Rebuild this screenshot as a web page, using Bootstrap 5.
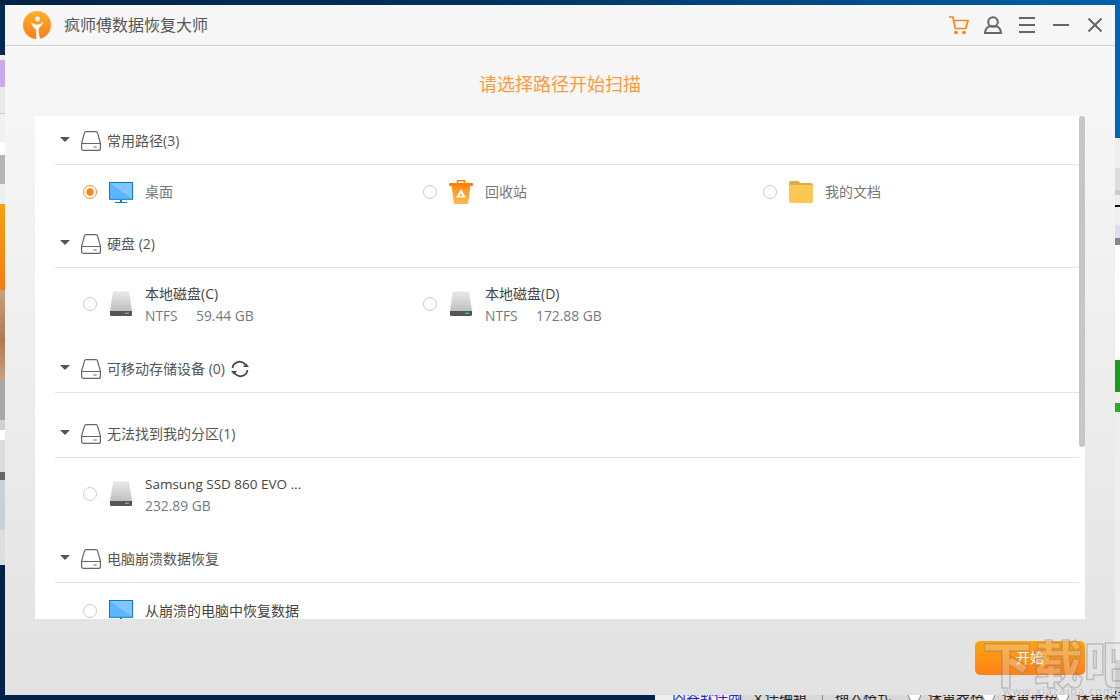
<!DOCTYPE html>
<html lang="zh">
<head>
<meta charset="utf-8">
<title>疯师傅数据恢复大师</title>
<link rel="stylesheet" href="https://cdn.jsdelivr.net/npm/bootstrap@5.3.0/dist/css/bootstrap.min.css">
<style>
html,body{margin:0;height:100%;overflow:hidden}
body{font-family:"Open Sans","Noto Sans CJK SC",sans-serif;font-size:14px;color:#555}
.desk{position:relative;width:1120px;height:700px;overflow:hidden;
 background:
  linear-gradient(90deg,#012246 0,#01305c 40%,#0060a8 100%) 0 0/100% 5px no-repeat,
  linear-gradient(180deg,#012a52 0 55px,#eee 55px 60px,#c9a9e8 60px 87px,#eaeaea 87px 113px,#ccc 113px 114px,#f0f0f0 114px 142px,#fff 142px 155px,#b5b5b5 155px 184px,#eee 184px 204px,#f7a010 204px,#f47c10 290px,#c9a080 290px,#b07a50 340px,#c9a080 380px,#a8a8a8 380px 420px,#d0d0d0 420px 430px,#fff 430px 440px,#ddd 440px 472px,#666 472px 480px,#c8d0d8 480px 530px,#ddd 530px 565px,#022347 565px) 0 0/5px 100% no-repeat,
  linear-gradient(180deg,#0066b0 0 138px,#eee 138px 168px,#ddd 168px 190px,#ccc 190px 195px,#eee 195px 205px,#111 205px 207px,#eee 207px 225px,#dde 225px 238px,#888 238px 245px,#fff 245px 360px,#1a9a1a 360px 392px,#eee 392px 403px,#2ea82e 403px 412px,#eee 412px 660px,#ccc 660px) 100% 0/5px 100% no-repeat,
  linear-gradient(90deg,#022347 0 655px,#efefef 655px 738px,#d8d8d8 738px) 0 100%/100% 5px no-repeat,
  #eee}
.behind{position:absolute;left:672px;top:687px;font-size:14px;line-height:18px;color:#222;white-space:nowrap}
.behind-link{color:#22c;width:66px}
.behind-cell{width:77px;border-left:1px solid #888;padding-left:12px}
.behind-cell2{width:76px;margin-left:7px}
.behind-opt{width:74px;padding-left:30px;position:relative}
.behind-opt::before{content:"";position:absolute;left:10px;top:2px;width:13px;height:13px;border:1px solid #777;border-radius:50%;background:#fff}
.appwin{position:absolute;left:5px;top:5px;width:1110px;height:690px;display:flex;flex-direction:column;background:linear-gradient(180deg,#f8f8f8 0,#f4f4f4 25%,#e2e2e2 100%)}
.titlebar{height:41px;flex:none;border-bottom:1px solid #d2d2d2;background:#f7f7f7;padding-left:18px;padding-right:13px}
.apptitle{font-size:16px;color:#555;margin-left:13px;line-height:22px}
.tool-ico{display:block;color:#666}
.tool-cart{color:#ff8416}
.t-gap1{margin-left:15px}.t-gap2{margin-left:17px}.t-gap3{margin-left:18px}.t-gap4{margin-left:19px}
.heading-pick{font-size:18px;line-height:24px;color:#ff9a3c;text-align:center;margin:26px 0 20px;font-weight:400}
.panel-wrap{position:relative;margin:0 30px;height:503px;background:#fff;overflow:hidden;flex:none}
.thumb{position:absolute;top:0;right:0;width:6px;height:331px;background:#c6c6c6;border-radius:3px}
.scroll-body{padding:2px 6px 0 20px}
.sec-head{height:47px;border-bottom:1px solid #e2e2e2;color:#555;line-height:20px;padding-bottom:1px}
.caret-d{width:0;height:0;border-left:5px solid transparent;border-right:5px solid transparent;border-top:5px solid #555;margin:0 11px 2px 5px}
.sec-title{margin-left:6px}
.refresh{margin-left:5px}
.body-a{height:56px;padding-bottom:2px}.body-b{height:78px;padding-top:15px}.body-c{height:18px}.body-d{padding-top:17px}
.item{width:340px;padding-left:28px}
.form-check-input.pick{width:14px;height:14px;margin:0 12px 0 0;border:1.5px solid #ccc;flex:none;background-image:none;box-shadow:none}
.form-check-input.pick:checked{background-color:#fff;border-color:#ff8c2e;background-image:radial-gradient(circle,#ff8416 0 3.4px,transparent 4px)}
.item-two .pick,.item-two .item-ico{margin-bottom:2px}
.item-ico{flex:none;display:block}
.lab{margin-left:12px;color:#777;line-height:20px}
.two{margin-left:12px;line-height:22px}
.two-top{color:#444}
.two-name{font-size:13.5px}
.two-sub{color:#6f7a82;font-size:13.8px}
.fs{display:inline-block;width:51px}
.lab-dark{color:#444}
.foot{flex:1;padding-right:30px;padding-top:22px}
.btn.go{width:110px;height:34px;padding:0;border:0;border-radius:5px;background:linear-gradient(180deg,#ffa412,#ff8119);color:#fff;font-size:14px;line-height:34px}
.wm{position:absolute;left:982px;top:630px;font-family:"Noto Sans CJK SC",sans-serif;font-weight:900;font-size:50px;line-height:62px;letter-spacing:1px;white-space:nowrap;color:rgba(230,230,230,.28);-webkit-text-stroke:1.5px rgba(110,110,110,.33);pointer-events:none}
.wm-url{position:absolute;left:1003px;top:684px;font-size:11px;line-height:14px;letter-spacing:1px;color:rgba(120,120,120,.35);pointer-events:none}
.spr{position:absolute;width:0;height:0}
</style>
</head>
<body>
<svg class="spr" aria-hidden="true">
 <defs>
  <linearGradient id="gm" x1="0" y1="1" x2="1" y2="0"><stop offset=".5" stop-color="#5cb6ff"/><stop offset=".5" stop-color="#7fc6ff"/></linearGradient>
  <linearGradient id="gd" x1="0" y1="0" x2="0" y2="1"><stop offset="0" stop-color="#e8e8e8"/><stop offset="1" stop-color="#bdbdbd"/></linearGradient>
  <linearGradient id="gt" x1="0" y1="0" x2="0" y2="1"><stop offset="0" stop-color="#ff8a10"/><stop offset="1" stop-color="#ffbb4a"/></linearGradient>
  <linearGradient id="gl" x1="0" y1="0" x2="0" y2="1"><stop offset="0" stop-color="#ffb02e"/><stop offset="1" stop-color="#ff7d14"/></linearGradient>
 </defs>
 <symbol id="hdd" viewBox="0 0 20 20"><path d="M5 .6h10c.8 0 1.300.4 1.500 1.200L19.400 12v5.400c0 1.300-.8 2-2 2H2.600c-1.200 0-2-.7-2-2V12L3.500 1.800C3.700 1 4.200.6 5 .6zM.8 12.500h18.400M12.500 16h3.200" fill="none" stroke="#666" stroke-width="1.200"/></symbol>
 <symbol id="mon" viewBox="0 0 24 21"><rect x=".5" y=".5" width="23" height="16.800" fill="url(#gm)" stroke="#0a7cc4"/><path d="M11 18h2v2h-2zM6 20h12v1H6z" fill="#0a7cc4"/></symbol>
 <symbol id="disk" viewBox="0 0 24 26"><path d="M4.500 1h15l3.500 18.500V21H1v-1.500z" fill="url(#gd)" stroke="#d8d8d8" stroke-width=".6"/><path d="M1 20h22v3.500c0 1-.6 1.500-1.500 1.500h-19C1.600 25 1 24.500 1 23.500z" fill="#565656"/><rect x="16" y="21.600" width="4" height="1.300" fill="#3fdc6a"/></symbol>
</svg>
<div class="desk">
 <div class="behind d-flex"><span class="behind-link">内容软件园</span><span class="behind-cell">文件编辑</span><span class="behind-cell behind-cell2">插入格式</span><span class="behind-opt">保留表格</span><span class="behind-opt">保留链接</span><span class="behind-opt">保留格式</span></div>
 <div class="appwin">
  <div class="titlebar d-flex align-items-center">
   <svg width="28" height="28" viewBox="0 0 28 28" class="tool-ico"><circle cx="14" cy="14" r="14" fill="url(#gl)"/><circle cx="14.500" cy="8" r="2.400" fill="#fff"/><path d="M8 11C9 16 12 17 13 19L13.500 28H17C16 23 15 19 16 17C18 15 20 13 20.500 10C18 13 16 13.500 14.500 13.500C12 13.500 10 13 8 11z" fill="#fff"/></svg>
   <span class="apptitle">疯师傅数据恢复大师</span>
   <div class="ms-auto d-flex align-items-center">
    <svg class="tool-ico tool-cart" width="20" height="18" viewBox="0 0 20 18" fill="none" stroke="currentColor" stroke-width="1.700"><path d="M0 1h3.800l2.500 11.500h10.400L19 4.500H4.800"/><circle cx="7" cy="16.500" r="1" fill="currentColor"/><circle cx="15" cy="16.500" r="1" fill="currentColor"/></svg>
    <svg class="tool-ico t-gap1" width="18" height="18" viewBox="0 0 18 18" fill="none" stroke="currentColor" stroke-width="2"><circle cx="9" cy="6" r="4.800"/><path d="M1 17c0-4 3-6.500 5-6.800h6c2 .3 5 2.800 5 6.800z"/></svg>
    <svg class="tool-ico t-gap2" width="16" height="16" viewBox="0 0 16 16" fill="none" stroke="currentColor" stroke-width="2"><path d="M0 1h16M0 8h16M0 15h16"/></svg>
    <svg class="tool-ico t-gap3" width="16" height="16" viewBox="0 0 16 16" fill="none" stroke="currentColor" stroke-width="2"><path d="M0 8h16"/></svg>
    <svg class="tool-ico t-gap4" width="14" height="14" viewBox="0 0 14 14" fill="none" stroke="currentColor" stroke-width="2"><path d="M.5.500l13 13M13.500.500l-13 13"/></svg>
   </div>
  </div>
  <h1 class="heading-pick">请选择路径开始扫描</h1>
  <div class="panel-wrap">
   <div class="scroll-body">
    <div class="sec-head d-flex align-items-center"><i class="caret-d"></i><svg width="20" height="20"><use href="#hdd"/></svg><span class="sec-title">常用路径(3)</span></div>
    <div class="body-a d-flex align-items-center">
     <label class="item d-flex align-items-center"><input class="form-check-input pick" type="radio" name="p" checked><svg class="item-ico" width="24" height="21"><use href="#mon"/></svg><span class="lab">桌面</span></label>
     <label class="item d-flex align-items-center"><input class="form-check-input pick" type="radio" name="p"><svg class="item-ico" width="24" height="24" viewBox="0 0 24 24"><path d="M2.500 5h19L19 24H5z" fill="url(#gt)"/><rect x="0" y="3" width="24" height="3" rx="1" fill="#ff7e0c"/><path d="M8.500 3V.8h7V3" fill="none" stroke="#ff7e0c" stroke-width="1.400"/><path d="M12 9l5 8.500H7z" fill="#fff"/><path d="M12 13l1.700 3h-3.400z" fill="#ffb23c"/></svg><span class="lab">回收站</span></label>
     <label class="item d-flex align-items-center"><input class="form-check-input pick" type="radio" name="p"><svg class="item-ico" width="24" height="22" viewBox="0 0 24 22"><path d="M0 2c0-1.200.8-2 2-2h7l3 2h10c1.200 0 2 .8 2 2v3H0z" fill="#dcae44"/><path d="M0 4h24v16c0 1.200-.8 2-2 2H2c-1.200 0-2-.8-2-2z" fill="#fec654"/></svg><span class="lab">我的文档</span></label>
    </div>
    <div class="sec-head d-flex align-items-center"><i class="caret-d"></i><svg width="20" height="20"><use href="#hdd"/></svg><span class="sec-title">硬盘 (2)</span></div>
    <div class="body-b d-flex">
     <label class="item item-two d-flex align-items-center align-self-start"><input class="form-check-input pick" type="radio" name="p"><svg class="item-ico" width="24" height="26"><use href="#disk"/></svg><span class="two"><span class="two-top d-block">本地磁盘(C)</span><span class="two-sub d-block"><span class="fs">NTFS</span>59.44 GB</span></span></label>
     <label class="item item-two d-flex align-items-center align-self-start"><input class="form-check-input pick" type="radio" name="p"><svg class="item-ico" width="24" height="26"><use href="#disk"/></svg><span class="two"><span class="two-top d-block">本地磁盘(D)</span><span class="two-sub d-block"><span class="fs">NTFS</span>172.88 GB</span></span></label>
    </div>
    <div class="sec-head d-flex align-items-center"><i class="caret-d"></i><svg width="20" height="20"><use href="#hdd"/></svg><span class="sec-title">可移动存储设备 (0)</span><svg class="refresh" width="20" height="18" viewBox="0 0 20 18" fill="none" stroke="#444" stroke-width="1.800"><path d="M2.500 8A7 7 0 0 1 15 4.500"/><path d="M17.500 10A7 7 0 0 1 5 13.500"/><path d="M13 7h6l-3-3.800z" fill="#444" stroke="none"/><path d="M1 11h6L4 14.800z" fill="#444" stroke="none"/></svg></div>
    <div class="body-c"></div>
    <div class="sec-head d-flex align-items-center"><i class="caret-d"></i><svg width="20" height="20"><use href="#hdd"/></svg><span class="sec-title">无法找到我的分区(1)</span></div>
    <div class="body-b d-flex">
     <label class="item item-two d-flex align-items-center align-self-start"><input class="form-check-input pick" type="radio" name="p"><svg class="item-ico" width="24" height="26"><use href="#disk"/></svg><span class="two"><span class="two-top two-name d-block">Samsung SSD 860 EVO ...</span><span class="two-sub d-block">232.89 GB</span></span></label>
    </div>
    <div class="sec-head d-flex align-items-center"><i class="caret-d"></i><svg width="20" height="20"><use href="#hdd"/></svg><span class="sec-title">电脑崩溃数据恢复</span></div>
    <div class="body-b body-d d-flex">
     <label class="item d-flex align-items-center align-self-start"><input class="form-check-input pick" type="radio" name="p"><svg class="item-ico" width="24" height="21"><use href="#mon"/></svg><span class="lab lab-dark">从崩溃的电脑中恢复数据</span></label>
    </div>
   </div>
   <div class="thumb"></div>
  </div>
  <div class="foot d-flex justify-content-end align-items-start"><button type="button" class="btn go">开始</button></div>
 </div>
 <div class="wm">下载吧</div>
 <div class="wm-url">www.xiazaiba.com</div>
</div>
<script src="https://cdn.jsdelivr.net/npm/bootstrap@5.3.0/dist/js/bootstrap.bundle.min.js"></script>
</body>
</html>
